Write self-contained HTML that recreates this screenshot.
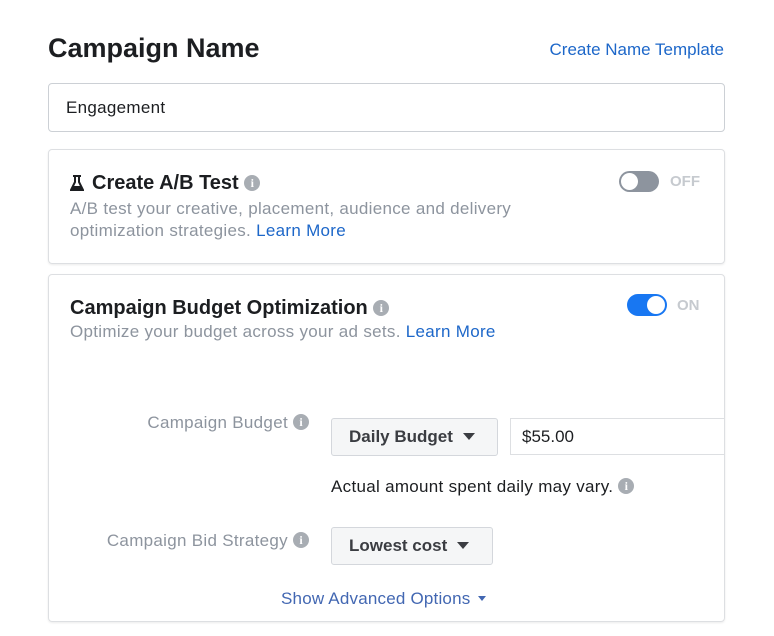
<!DOCTYPE html>
<html><head><style>
*{margin:0;padding:0;box-sizing:border-box}
body{width:774px;height:636px;background:#fff;font-family:"Liberation Sans",sans-serif;position:relative;overflow:hidden;color:#1c1e21}
.a{position:absolute;white-space:nowrap}
.card{position:absolute;left:48px;width:677px;border:1px solid #dddfe2;border-radius:4px;box-shadow:0 1px 2px rgba(0,0,0,.08)}
.i{display:inline-block;width:16px;height:16px;border-radius:50%;background:#a8adb3;color:#fff;font:bold 12px/16px "Liberation Serif",serif;text-align:center;vertical-align:2px;letter-spacing:0}
.btn{position:absolute;background:#f5f6f7;border:1px solid #d4d7dc;border-radius:3px;font-weight:bold;font-size:17px;color:#3b3d42;padding-left:17px;line-height:36px}
.tri{display:inline-block;width:0;height:0;border-left:6px solid transparent;border-right:6px solid transparent;border-top:7px solid #3b3d42;margin-left:10px;vertical-align:2px}
.g{color:#8d949e;font-size:17px;letter-spacing:.3px}
.l{color:#1d67c9}
</style></head><body>
<div class="a" style="left:48px;top:33px;font-size:27px;font-weight:bold">Campaign Name</div>
<div class="a" style="right:50px;top:40px;font-size:17px;color:#1d67c9">Create Name Template</div>
<div class="a" style="left:48px;top:83px;width:677px;height:49px;border:1px solid #ccd0d5;border-radius:4px;font-size:17px;line-height:47px;padding-left:17px;letter-spacing:.3px">Engagement</div>

<div class="card" style="top:149px;height:115px"></div>
<svg class="a" style="left:70px;top:175px" width="14" height="17" viewBox="0 0 14 17"><path d="M3 1h8M5 1v6L1 15h12L9 7V1" fill="none" stroke="#1c1e21" stroke-width="2"/><path d="M3 11h8l2 4H1z" fill="#1c1e21"/></svg>
<div class="a" style="left:92px;top:172px;font-size:20px;font-weight:bold">Create A/B Test <span class="i">i</span></div>
<div class="a" style="left:619px;top:171px;width:40px;height:21px;border-radius:11px;background:#8d949e"><div style="position:absolute;left:2px;top:2px;width:17px;height:17px;border-radius:50%;background:#fff"></div></div>
<div class="a" style="left:670px;top:173px;font-size:15px;font-weight:bold;color:#c6cacf">OFF</div>
<div class="a g" style="left:70px;top:198px;line-height:22px">A/B test your creative, placement, audience and delivery<br>optimization strategies. <span class="l">Learn More</span></div>

<div class="card" style="top:274px;height:348px"></div>
<div class="a" style="left:70px;top:297px;font-size:20px;font-weight:bold">Campaign Budget Optimization <span class="i">i</span></div>
<div class="a" style="left:627px;top:294px;width:40px;height:22px;border-radius:11px;background:#1877f2"><div style="position:absolute;right:2px;top:2px;width:18px;height:18px;border-radius:50%;background:#fff"></div></div>
<div class="a" style="left:677px;top:297px;font-size:15px;font-weight:bold;color:#c6cacf">ON</div>
<div class="a g" style="left:70px;top:322px">Optimize your budget across your ad sets. <span class="l">Learn More</span></div>

<div class="a g" style="right:465px;top:413px">Campaign Budget <span class="i">i</span></div>
<div class="btn" style="left:331px;top:418px;width:167px;height:38px">Daily Budget<span class="tri"></span></div>
<div class="a" style="left:510px;top:418px;width:215px;height:37px;border:1px solid #dddfe2;font-size:17px;line-height:35px;padding-left:11px">$55.00</div>
<div class="a" style="left:331px;top:477px;font-size:17px;letter-spacing:.3px">Actual amount spent daily may vary. <span class="i">i</span></div>
<div class="a g" style="right:465px;top:531px">Campaign Bid Strategy <span class="i">i</span></div>
<div class="btn" style="left:331px;top:527px;width:162px;height:38px">Lowest cost<span class="tri"></span></div>
<div class="a" style="left:281px;top:589px;font-size:17px;color:#4267b2;letter-spacing:.2px">Show Advanced Options <span style="display:inline-block;border-left:4px solid transparent;border-right:4px solid transparent;border-top:5px solid #4267b2;vertical-align:3px;margin-left:3px"></span></div>
</body></html>
